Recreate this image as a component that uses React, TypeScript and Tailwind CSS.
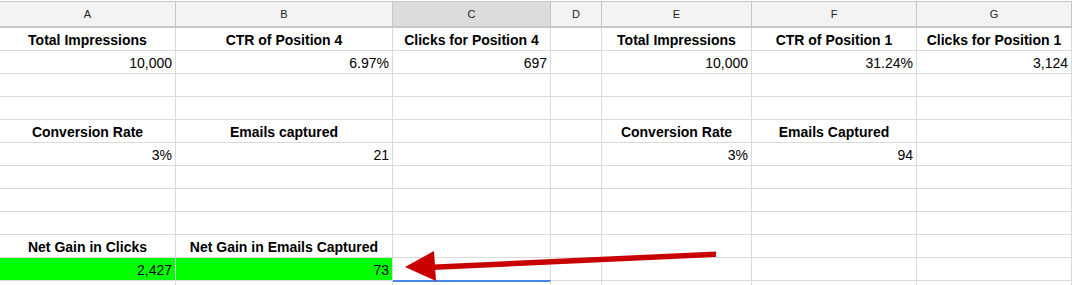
import React from 'react';

type Cell = { text?: string; bold?: boolean; green?: boolean };

const widths = ['w-[176px]', 'w-[217px]', 'w-[158px]', 'w-[51px]', 'w-[150px]', 'w-[165px]', 'w-[155px]'];
const letters = ['A', 'B', 'C', 'D', 'E', 'F', 'G'];

const h = (text: string): Cell => ({ text, bold: true });
const v = (text: string): Cell => ({ text });

const rows: Cell[][] = [
  [h('Total Impressions'), h('CTR of Position 4'), h('Clicks for Position 4'), {}, h('Total Impressions'), h('CTR of Position 1'), h('Clicks for Position 1')],
  [v('10,000'), v('6.97%'), v('697'), {}, v('10,000'), v('31.24%'), v('3,124')],
  [],
  [],
  [h('Conversion Rate'), h('Emails captured'), {}, {}, h('Conversion Rate'), h('Emails Captured'), {}],
  [v('3%'), v('21'), {}, {}, v('3%'), v('94'), {}],
  [],
  [],
  [],
  [h('Net Gain in Clicks'), h('Net Gain in Emails Captured'), {}, {}, {}, {}, {}],
  [{ text: '2,427', green: true }, { text: '73', green: true }, {}, {}, {}, {}, {}],
  [],
];

const Arrow: React.FC = () => (
  <svg className="absolute left-0 top-0 pointer-events-none" width="1072" height="285" viewBox="0 0 1072 285">
    <polygon points="716,251.5 716,257 433,270 433,264.5" fill="#c80000" />
    <polygon points="405,267 434,251 436,281" fill="#c80000" />
  </svg>
);

const App: React.FC = () => {
  return (
    <div className="relative w-[1072px] h-[285px] overflow-hidden bg-white font-['Liberation_Sans',Arial,sans-serif] text-black">
      <div className="flex h-[28px] pt-px">
        {letters.map((l, i) => (
          <div
            key={l}
            className={`${widths[i]} shrink-0 flex items-center justify-center border-t border-b-2 border-r border-[#c6c6c6] text-[11px] text-[#222] ${l === 'C' ? 'bg-[#dcdcdc]' : 'bg-[#f3f3f3]'}`}
          >
            {l}
          </div>
        ))}
      </div>
      {rows.map((row, r) => (
        <div key={r} className="flex h-[23px]">
          {widths.map((w, c) => {
            const cell = row[c] || {};
            const selected = r === 11 && c === 2;
            return (
              <div
                key={c}
                className={`${w} shrink-0 flex items-center border-r border-b border-[#dadada] text-[14px] leading-none px-[3px] pt-[2px] whitespace-nowrap ${cell.bold ? 'justify-center font-bold' : 'justify-end'} ${cell.green ? 'bg-[#00ff00]' : ''} ${selected ? 'border-t-2 border-t-[#4a86e8] -mt-px' : ''}`}
              >
                {cell.text}
              </div>
            );
          })}
        </div>
      ))}
      <Arrow />
    </div>
  );
};

export default App;
